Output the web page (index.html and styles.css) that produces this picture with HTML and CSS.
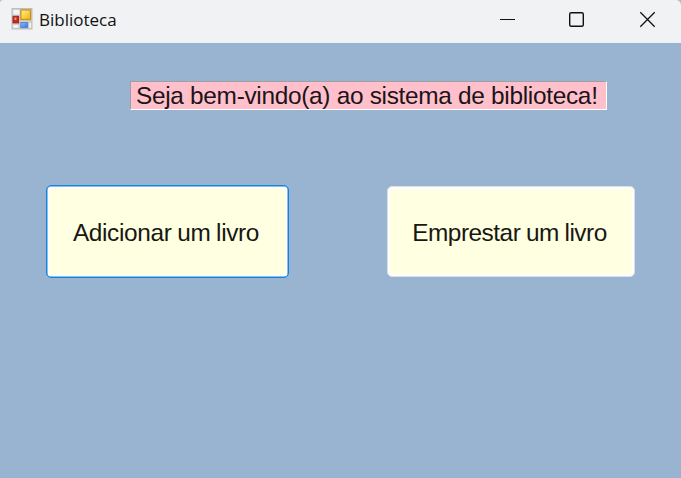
FILE: index.html
```html
<!DOCTYPE html>
<html lang="pt-BR">
<head>
<meta charset="utf-8">
<title>Biblioteca</title>
<link rel="stylesheet" href="styles.css">
</head>
<body>
<div class="window">
  <header class="titlebar">
    <svg class="app-icon" width="22" height="22" viewBox="0 0 22 22">
      <defs>
        <linearGradient id="gold" x1="0" y1="0" x2="1" y2="1"><stop offset="0" stop-color="#fff0a0"/><stop offset="1" stop-color="#f5b400"/></linearGradient>
        <linearGradient id="blue" x1="0" y1="0" x2="1" y2="1"><stop offset="0" stop-color="#91bbfa"/><stop offset="1" stop-color="#3473e0"/></linearGradient>
      </defs>
      <rect x="1" y=".5" width="20" height="20.5" fill="#cfd0d1" stroke="#bcbdbe"/>
      <path d="M2.3 2h6v4.5h-6zM2.3 17h5v2.8h-5zM18.3 15h1.7v4.8h-1.7z" fill="#f4f4f5"/>
      <rect x="9.9" y="1.9" width="9.6" height="9.6" fill="url(#gold)" stroke="#cb9417" stroke-width="1.3"/>
      <rect x="2" y="8.3" width="5.6" height="6.6" fill="#c9281d" stroke="#aa2018"/>
      <rect x="3.4" y="9.5" width="2" height="2.5" fill="#ee9687"/>
      <rect x="9.8" y="14.5" width="6.8" height="5.2" fill="url(#blue)" stroke="#5b85cc"/>
    </svg>
    <span class="title">Biblioteca</span>
    <svg class="controls" width="157" height="18" viewBox="0 0 157 18" fill="none" stroke="#111">
      <path d="M0 9.5h15"/>
      <rect x="69.7" y="2.7" width="13.6" height="13.6" rx="1.5" stroke-width="1.4"/>
      <path d="M140.3 2.3l14.4 14.4M154.7 2.3l-14.4 14.4" stroke-width="1.3"/>
    </svg>
  </header>
  <main class="form">
    <h1 class="welcome">Seja bem-vindo(a) ao sistema de biblioteca!</h1>
    <div class="actions">
      <button class="action action-focused">Adicionar um livro</button>
      <button class="action action-plain">Emprestar um livro</button>
    </div>
  </main>
</div>
</body>
</html>
```
FILE: styles.css
```css
* { box-sizing: border-box; }
body { margin: 0; background: #b5b7b9; overflow: hidden; }
.window {
  width: 681px;
  height: 478px;
  background: #99b4d1;
  border-radius: 3px 5px 0 0;
  overflow: hidden;
}
.titlebar {
  display: flex;
  height: 43px;
  padding: 8px 24px 0 11px;
  background: #f0f2f4;
}
.app-icon { flex: none; }
.title {
  margin-left: 6px;
  font: 17px/24px "Open Sans", sans-serif;
  color: #111;
}
.controls { margin: 2px 0 0 auto; }
.form { padding: 38px 46px 0; }
.welcome {
  width: 477px;
  height: 29px;
  margin: 0 0 0 84px;
  padding-left: 5px;
  border: 1px solid #a0a0a0;
  border-right-color: #fff;
  border-bottom-color: #fff;
  background: #ffc0cb;
  font: 24.4px/28px "Liberation Sans", Arial, sans-serif;
  letter-spacing: -0.3px;
  color: #1b1418;
  white-space: nowrap;
}
.actions {
  display: flex;
  justify-content: space-between;
  align-items: center;
  margin-top: 75px;
}
.action {
  padding: 2px 3px 0 0;
  border-radius: 5px;
  background: #ffffe1;
  font: 24.4px/28px "Liberation Sans", Arial, sans-serif;
  color: #171713;
  white-space: nowrap;
}
.action-focused {
  width: 243px;
  height: 93px;
  border: 1px solid #1683db;
  box-shadow: inset 0 0 0 .5px #1683db, inset 0 0 0 2.5px #fff;
  letter-spacing: -0.35px;
  word-spacing: -0.7px;
}
.action-plain {
  width: 248px;
  height: 91px;
  border: 1px solid #dedfe2;
  box-shadow: inset 0 0 0 2px #fdfcff;
  letter-spacing: -0.5px;
  word-spacing: -0.6px;
}
```
